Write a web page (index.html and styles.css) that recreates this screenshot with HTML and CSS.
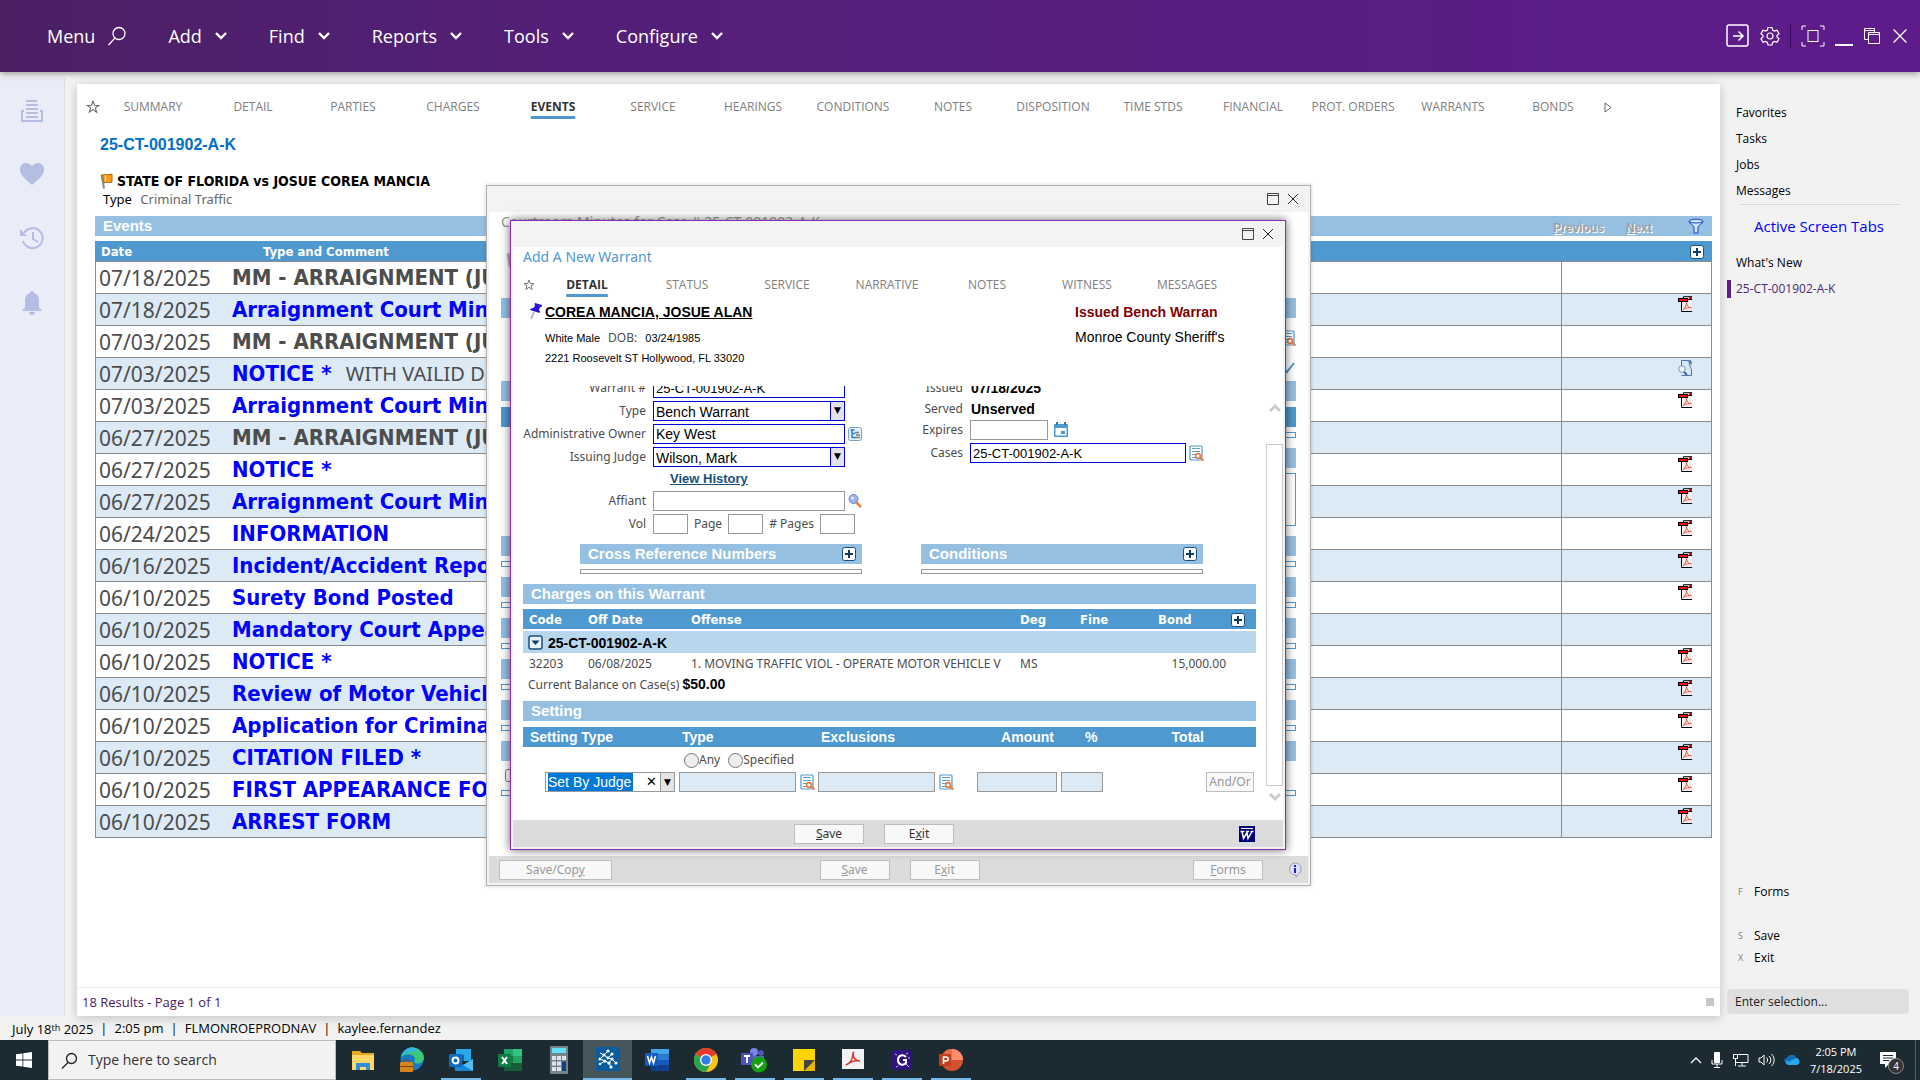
FILE: index.html
```html
<!DOCTYPE html>
<html lang="en">
<head>
    <meta charset="UTF-8">
    <meta name="viewport" content="width=device-width, initial-scale=1.0">
    <title>Add A New Warrant</title>
    <link rel="stylesheet" href="styles.css">
</head>
<body>
    <!-- Shared icons -->
    <svg class="sprite" xmlns="http://www.w3.org/2000/svg">
        <symbol id="chevron" viewBox="0 0 14 10"><path d="M2 2l5 5 5-5" fill="none" stroke="currentColor" stroke-width="2.4"/></symbol>
        <symbol id="star" viewBox="0 0 12 12"><path d="M6 1l1.3 3.5 3.6.1-2.9 2.2 1.1 3.6L6 8.3l-3.1 2.1L4 6.8 1.1 4.6l3.6-.1z" fill="none" stroke="#666" stroke-width=".9"/></symbol>
        <symbol id="close" viewBox="0 0 14 14"><path d="M2 2l10 10M12 2L2 12" fill="none" stroke="currentColor"/></symbol>
        <symbol id="maximize" viewBox="0 0 14 14"><path d="M1.5 1.5h11v11h-11zM1.5 3.5h11" fill="none" stroke="#444"/></symbol>
        <symbol id="plus" viewBox="0 0 14 14"><rect x=".5" y=".5" width="13" height="13" rx="2" fill="#fff" stroke="#164f7c"/><path d="M7 3v8M3 7h8" stroke="#0b3c66" stroke-width="2"/></symbol>
        <symbol id="pdf" viewBox="0 0 14 16"><path d="M5 .5h8.500V15.500H3.500V6" fill="#eee"/><path d="M14 .7H5.500v2M14 3.500H9M3.500 6v9.500H14" fill="none" stroke="#000"/><rect x="11" y="1" width="3" height="2" fill="#e00"/><rect x=".5" y="2.500" width="9" height="3" fill="#f00" stroke="#000"/><path d="M5 13.500c2-1 3.500-4 3.500-7 .5 3.500 2 5.500 5 5M5 13.500c3-2 6-2 8.500-2" fill="none" stroke="#e8604c"/></symbol>
        <symbol id="preview" viewBox="0 0 14 16"><path d="M3.500 6V.5h7.500c0 3 1 6 2.500 9v6H3.500" fill="#d7e6f5" stroke="#4a74a8"/><path d="M10.500.5h3v5z" fill="#3767a3"/><circle cx="4" cy="9" r="3.300" fill="#eef6ff" stroke="#7795bd"/><path d="M6 12l3 3" stroke="#3767a3" stroke-width="2"/></symbol>
        <symbol id="lookup" viewBox="0 0 15 16"><rect x="1" y="1" width="12" height="14" rx="1" fill="#fff" stroke="#4e99cf" stroke-width="1.200"/><path d="M3 3.500h8M3 6.500h8M3 9.500h4M3 12.500h3" stroke="#5e9ec8"/><circle cx="9" cy="11" r="2.400" fill="#fff" stroke="#e8793e" stroke-width="1.600"/><path d="M11 12.500l3.500 3" stroke="#e8793e" stroke-width="1.800"/></symbol>
        <symbol id="flag" viewBox="0 0 13 16"><path d="M1.500 1.500L4 15.500" stroke="#8c8c8c" stroke-width="2"/><path d="M2.500 2c3-2 5 1 9.500-1v8c-3.500 1.500-5-.5-8 1z" fill="#f59a1b" stroke="#b8690b"/><path d="M5.500 2.500v6" stroke="#ffd071" stroke-width="1.500"/></symbol>
    </svg>

    <header class="topbar">
        <nav class="menu">
            <button class="menu-item">Menu <svg width="20" height="20" viewBox="0 0 20 20"><circle cx="12" cy="7.500" r="6" fill="none" stroke="#fff" stroke-width="1.300"/><path d="M8 12l-6.500 7" stroke="#fff" stroke-width="1.300"/></svg></button>
            <button class="menu-item">Add <svg width="14" height="10"><use href="#chevron"/></svg></button>
            <button class="menu-item">Find <svg width="14" height="10"><use href="#chevron"/></svg></button>
            <button class="menu-item">Reports <svg width="14" height="10"><use href="#chevron"/></svg></button>
            <button class="menu-item">Tools <svg width="14" height="10"><use href="#chevron"/></svg></button>
            <button class="menu-item">Configure <svg width="14" height="10"><use href="#chevron"/></svg></button>
        </nav>
        <div class="window-tools">
            <button class="icon-btn" aria-label="Sign out"><svg width="24" height="24" viewBox="0 0 24 24" fill="none" stroke="#fff" stroke-width="1.500"><rect x="1" y="1" width="21" height="21" rx="2"/><path d="M7 12h10M12.500 7.500L17 12l-4.500 4.500"/></svg></button>
            <button class="icon-btn" aria-label="Settings"><svg width="20" height="20" viewBox="0 0 20 20" fill="none" stroke="#fff" stroke-width="1.200"><circle cx="10" cy="10" r="3"/><path d="M8 1.500h4l.6 2.600 1.800 1 2.600-.8 2 3.400-2 1.800v1.500l2 1.800-2 3.400-2.600-.8-1.800 1-.6 2.600H8l-.6-2.600-1.800-1-2.600.8-2-3.400 2-1.800V9.500L1 7.700l2-3.400 2.600.8 1.800-1z"/></svg></button>
            <span class="tool-divider"></span>
            <button class="icon-btn" aria-label="Full screen"><svg width="24" height="22" viewBox="0 0 24 22" fill="none" stroke="#fff"><path d="M1 5V1h4M19 1h4v4M23 17v4h-4M5 21H1v-4"/><rect x="7" y="5.500" width="10" height="11"/></svg></button>
            <button class="icon-btn" aria-label="Minimize"><svg width="18" height="22" viewBox="0 0 18 22"><path d="M0 20h18" stroke="#fff" stroke-width="2"/></svg></button>
            <button class="icon-btn" aria-label="Restore"><svg width="18" height="18" viewBox="0 0 18 18" fill="none" stroke="#fff"><path d="M5.500 12.500h-4v-11h10v4M1.500 3.500h10"/><path d="M5.500 5.500h11v11h-11zM5.500 7.500h11"/></svg></button>
            <button class="icon-btn" aria-label="Close"><svg width="18" height="18"><use href="#close"/></svg></button>
        </div>
    </header>

    <div class="workspace">
        <nav class="rail">
            <svg width="24" height="22" viewBox="0 0 24 22" fill="none" stroke="#b5bde5" stroke-width="2"><path d="M6 1h11M6 5h12M6 9h12M6 13h12M6 17h12M4 11H2v10h20V11h-2" /></svg>
            <svg width="26" height="24" viewBox="0 0 26 24"><path d="M13 23C6 17 1 13 1 7.500 1 3.500 4 1 7 1c2.500 0 4.500 1 6 3.500C14.500 2 16.500 1 19 1c3 0 6 2.500 6 6.500C25 13 20 17 13 23z" fill="#b5bde5"/></svg>
            <svg width="26" height="24" viewBox="0 0 26 24" fill="none" stroke="#b5bde5" stroke-width="2"><path d="M4 15a10 10 0 1 0 1-8"/><path d="M1 3v7h7z" fill="#b5bde5" stroke="none"/><path d="M14 6v7l5 3"/></svg>
            <svg width="22" height="26" viewBox="0 0 22 26"><path d="M11 1c1.500 0 2 1 2 2 4 1 5 5 5 8v6l3 4H1l3-4v-6c0-3 1-7 5-8 0-1 .5-2 2-2zM8 22h6c0 2-1.500 3-3 3s-3-1-3-3z" fill="#b5bde5"/></svg>
        </nav>

        <main class="page">
            <nav class="tabs">
                <svg width="16" height="14"><use href="#star"/></svg>
                <a href="#">SUMMARY</a>
                <a href="#">DETAIL</a>
                <a href="#">PARTIES</a>
                <a href="#">CHARGES</a>
                <a href="#" class="active">EVENTS</a>
                <a href="#">SERVICE</a>
                <a href="#">HEARINGS</a>
                <a href="#">CONDITIONS</a>
                <a href="#">NOTES</a>
                <a href="#">DISPOSITION</a>
                <a href="#">TIME STDS</a>
                <a href="#">FINANCIAL</a>
                <a href="#">PROT. ORDERS</a>
                <a href="#">WARRANTS</a>
                <a href="#">BONDS</a>
                <svg width="10" height="12" viewBox="0 0 10 12"><path d="M2 2v9l6-4.500z" fill="none" stroke="#666"/></svg>
            </nav>

            <section class="case">
                <h1>25-CT-001902-A-K</h1>
                <p class="case-style"><svg width="13" height="16"><use href="#flag"/></svg>STATE OF FLORIDA vs JOSUE COREA MANCIA</p>
                <p class="case-type"><span>Type</span> Criminal Traffic</p>
            </section>

            <section class="events">
                <div class="bar">
                    <h2>Events</h2>
                    <div class="pager">
                        <button disabled><u>P</u>revious</button>
                        <button disabled><u>N</u>ext</button>
                        <svg width="16" height="16" viewBox="0 0 16 16"><path d="M1 3.500c0-3 14-3 14 0 0 2-5 3.500-5 6V15H6V9.500C6 7 1 5.500 1 3.500z" fill="#cfe4ff" stroke="#1d3fd0"/><path d="M1 3.500c2 2 12 2 14 0" fill="none" stroke="#1d3fd0"/></svg>
                    </div>
                </div>
                <table class="event-table">
                    <thead>
                        <tr><th class="col-date">Date</th><th>Type and Comment</th><th class="col-doc"><svg width="14" height="14"><use href="#plus"/></svg></th></tr>
                    </thead>
                    <tbody>
                        <tr><td>07/18/2025</td><td><b>MM - ARRAIGNMENT (JUDGE WILSON)</b></td><td></td></tr>
                        <tr><td>07/18/2025</td><td><a href="#">Arraignment Court Minutes</a></td><td><svg width="14" height="16"><use href="#pdf"/></svg></td></tr>
                        <tr><td>07/03/2025</td><td><b>MM - ARRAIGNMENT (JUDGE WILSON)</b></td><td></td></tr>
                        <tr><td>07/03/2025</td><td><a href="#">NOTICE *</a> <span class="comment">WITH VAILID DL</span></td><td><svg width="14" height="16"><use href="#preview"/></svg></td></tr>
                        <tr><td>07/03/2025</td><td><a href="#">Arraignment Court Minutes</a></td><td><svg width="14" height="16"><use href="#pdf"/></svg></td></tr>
                        <tr><td>06/27/2025</td><td><b>MM - ARRAIGNMENT (JUDGE WILSON)</b></td><td></td></tr>
                        <tr><td>06/27/2025</td><td><a href="#">NOTICE *</a></td><td><svg width="14" height="16"><use href="#pdf"/></svg></td></tr>
                        <tr><td>06/27/2025</td><td><a href="#">Arraignment Court Minutes</a></td><td><svg width="14" height="16"><use href="#pdf"/></svg></td></tr>
                        <tr><td>06/24/2025</td><td><a href="#">INFORMATION</a></td><td><svg width="14" height="16"><use href="#pdf"/></svg></td></tr>
                        <tr><td>06/16/2025</td><td><a href="#">Incident/Accident Report</a></td><td><svg width="14" height="16"><use href="#pdf"/></svg></td></tr>
                        <tr><td>06/10/2025</td><td><a href="#">Surety Bond Posted</a></td><td><svg width="14" height="16"><use href="#pdf"/></svg></td></tr>
                        <tr><td>06/10/2025</td><td><a href="#">Mandatory Court Appearance</a></td><td></td></tr>
                        <tr><td>06/10/2025</td><td><a href="#">NOTICE *</a></td><td><svg width="14" height="16"><use href="#pdf"/></svg></td></tr>
                        <tr><td>06/10/2025</td><td><a href="#">Review of Motor Vehicle</a></td><td><svg width="14" height="16"><use href="#pdf"/></svg></td></tr>
                        <tr><td>06/10/2025</td><td><a href="#">Application for Criminal</a></td><td><svg width="14" height="16"><use href="#pdf"/></svg></td></tr>
                        <tr><td>06/10/2025</td><td><a href="#">CITATION FILED *</a></td><td><svg width="14" height="16"><use href="#pdf"/></svg></td></tr>
                        <tr><td>06/10/2025</td><td><a href="#">FIRST APPEARANCE FORM</a></td><td><svg width="14" height="16"><use href="#pdf"/></svg></td></tr>
                        <tr><td>06/10/2025</td><td><a href="#">ARREST FORM</a></td><td><svg width="14" height="16"><use href="#pdf"/></svg></td></tr>
                    </tbody>
                </table>
            </section>

            <footer class="results"><span>18 Results - Page 1 of 1</span><i class="grip"></i></footer>
        </main>

        <aside class="side">
            <ul class="side-links">
                <li><a href="#">Favorites</a></li>
                <li><a href="#">Tasks</a></li>
                <li><a href="#">Jobs</a></li>
                <li><a href="#">Messages</a></li>
            </ul>
            <a href="#" class="screen-tabs">Active Screen Tabs</a>
            <ul class="side-links">
                <li><a href="#">What's New</a></li>
                <li class="current"><a href="#">25-CT-001902-A-K</a></li>
            </ul>
            <ul class="shortcuts">
                <li class="spaced"><kbd>F</kbd><a href="#">Forms</a></li>
                <li><kbd>S</kbd><a href="#">Save</a></li>
                <li><kbd>X</kbd><a href="#">Exit</a></li>
            </ul>
            <input class="selection" type="text" placeholder="Enter selection..." aria-label="Enter selection">
        </aside>
    </div>

    <div class="status">
        <span>July 18<small>th</small> 2025</span><span>2:05 pm</span><span>FLMONROEPRODNAV</span><span>kaylee.fernandez</span>
    </div>

    <!-- Court minutes window, behind the warrant window -->
    <div class="window minutes" role="dialog" aria-label="Courtroom Minutes">
        <div class="titlebar">
            <button class="icon-btn" aria-label="Maximize"><svg width="14" height="14"><use href="#maximize"/></svg></button>
            <button class="icon-btn" aria-label="Close"><svg width="14" height="14"><use href="#close"/></svg></button>
        </div>
        <div class="minutes-body">
            <h2>Courtroom Minutes for Case # 25-CT-001902-A-K</h2>
            <svg class="dim-flag" width="13" height="16"><use href="#flag"/></svg>
            <div class="bar"></div>
            <div class="minutes-tools">
                <svg width="15" height="16"><use href="#lookup"/></svg>
                <svg width="16" height="12" viewBox="0 0 16 12"><path d="M2 5l5 5 7-9" fill="none" stroke="#4e99cf" stroke-width="2"/></svg>
            </div>
            <div class="bar"></div>
            <div class="bar dark"></div>
            <div class="minutes-half">
                <div class="strip"></div>
                <div class="bar"></div>
                <div class="minutes-box"></div>
            </div>
            <div class="bar"></div><div class="strip"></div>
            <div class="bar"></div><div class="strip"></div>
            <div class="bar"></div><div class="strip"></div>
            <div class="bar"></div><div class="strip"></div>
            <div class="bar"></div><div class="strip"></div>
            <div class="bar"></div>
            <input type="checkbox" aria-label="Close minutes">
            <div class="strip"></div>
        </div>
        <div class="window-footer">
            <button class="push wide" disabled>Save/Cop<u>y</u></button>
            <div class="middle">
                <button class="push" disabled><u>S</u>ave</button>
                <button class="push" disabled>E<u>x</u>it</button>
            </div>
            <button class="push" disabled><u>F</u>orms</button>
            <svg width="14" height="16" viewBox="0 0 14 16"><path d="M7 1a6 6 0 0 1 3.500 11L8 15v-2A6 6 0 1 1 7 1z" fill="#dde0f8" stroke="#9c9cc4"/><path d="M7 3v2M7 6v5" stroke="#2020c8" stroke-width="2"/></svg>
        </div>
    </div>

    <!-- Warrant window -->
    <div class="window warrant" role="dialog" aria-label="Add A New Warrant">
        <div class="titlebar">
            <button class="icon-btn" aria-label="Maximize"><svg width="14" height="14"><use href="#maximize"/></svg></button>
            <button class="icon-btn" aria-label="Close"><svg width="14" height="14"><use href="#close"/></svg></button>
        </div>
        <div class="warrant-body">
            <div class="warrant-head">
                <h2>Add A New Warrant</h2>
                <nav class="tabs">
                    <svg width="12" height="14"><use href="#star"/></svg>
                    <a href="#" class="active">DETAIL</a>
                    <a href="#">STATUS</a>
                    <a href="#">SERVICE</a>
                    <a href="#">NARRATIVE</a>
                    <a href="#">NOTES</a>
                    <a href="#">WITNESS</a>
                    <a href="#">MESSAGES</a>
                </nav>
                <div class="person">
                    <svg width="14" height="18" viewBox="0 0 14 18"><path d="M5 10L2 17" stroke="#aaa" stroke-width="1.500"/><path d="M6 1l7 2-.5 2-1.500.3L10 8l1 1.500-.5 1.500L1 8l1-1.500L4.500 6 6 3.500 5.500 2z" fill="#2b10d8"/></svg>
                    <div class="person-info">
                        <a href="#" class="person-name">COREA MANCIA, JOSUE ALAN</a>
                        <p>White Male <span>DOB:</span> 03/24/1985</p>
                        <p>2221 Roosevelt ST Hollywood, FL 33020</p>
                    </div>
                    <div class="person-status">
                        <strong>Issued Bench Warran</strong>
                        <p>Monroe County Sheriff's</p>
                    </div>
                </div>
            </div>

            <div class="scroll">
                <form class="scroll-content">
                    <div class="form-columns">
                        <div class="fields left">
                            <label for="warrant-no">Warrant #</label>
                            <input id="warrant-no" class="required" type="text" value="25-CT-001902-A-K">
                            <i></i>
                            <label for="type">Type</label>
                            <div class="drop required"><select id="type"><option>Bench Warrant</option></select><span>▼</span></div>
                            <i></i>
                            <label for="owner">Administrative Owner</label>
                            <input id="owner" class="required" type="text" value="Key West">
                            <svg width="14" height="14" viewBox="0 0 14 14"><rect x=".5" y=".5" width="13" height="13" rx="2" fill="#e9f2fb" stroke="#7f9fc4"/><path d="M2.500 3h4M4 3v7.500h3M4 6.500h3" fill="none" stroke="#1f7fd0" stroke-width="1.400"/><path d="M7 5.500h4M8 8h4M7 10.500h5" stroke="#777" stroke-width="1.400"/></svg>
                            <label for="judge">Issuing Judge</label>
                            <div class="drop required"><select id="judge"><option>Wilson, Mark</option></select><span>▼</span></div>
                            <i></i>
                            <a href="#" class="history">View History</a>
                            <label for="affiant">Affiant</label>
                            <input id="affiant" type="text">
                            <svg width="14" height="14" viewBox="0 0 14 14"><path d="M8 8l5 5" stroke="#e8883a" stroke-width="2.600"/><circle cx="5.500" cy="5" r="4.500" fill="#9fb4ee" stroke="#6f86c8"/><circle cx="4.500" cy="4" r="1.500" fill="#e4ebff"/></svg>
                            <label for="vol">Vol</label>
                            <div class="volume">
                                <input id="vol" type="text">
                                <label for="page">Page</label><input id="page" type="text">
                                <label for="pages"># Pages</label><input id="pages" type="text">
                            </div>
                        </div>
                        <div class="fields right">
                            <span class="label">Issued</span><b>07/18/2025</b>
                            <span class="label">Served</span><b>Unserved</b>
                            <label for="expires">Expires</label>
                            <div class="with-icon">
                                <input id="expires" class="short" type="text">
                                <svg width="14" height="16" viewBox="0 0 14 16"><path d="M0 2h14v13H0z" fill="#4e99cf" /><path d="M1.500 6h11v7.500h-11z" fill="#fff"/><path d="M3 0v3M11 0v3" stroke="#2d78b0" stroke-width="2"/><path d="M7 9h4v3H7z" fill="#4e99cf"/></svg>
                            </div>
                            <label for="cases">Cases</label>
                            <div class="with-icon near">
                                <input id="cases" class="required" type="text" value="25-CT-001902-A-K">
                                <svg width="15" height="16"><use href="#lookup"/></svg>
                            </div>
                        </div>
                    </div>

                    <div class="lists">
                        <div>
                            <div class="bar"><h3>Cross Reference Numbers</h3><svg width="14" height="14"><use href="#plus"/></svg></div>
                            <div class="strip"></div>
                        </div>
                        <div>
                            <div class="bar"><h3>Conditions</h3><svg width="14" height="14"><use href="#plus"/></svg></div>
                            <div class="strip"></div>
                        </div>
                    </div>

                    <div class="bar"><h3>Charges on this Warrant</h3></div>
                    <table class="charges">
                        <thead>
                            <tr><th class="c-code">Code</th><th class="c-date">Off Date</th><th class="c-offense">Offense</th><th class="c-deg">Deg</th><th>Fine</th><th class="c-bond">Bond</th><th class="c-add"><svg width="14" height="14"><use href="#plus"/></svg></th></tr>
                        </thead>
                        <tbody>
                            <tr class="group"><td colspan="7"><svg width="15" height="15" viewBox="0 0 15 15"><rect x="1" y="1" width="13" height="13" rx="2" fill="#e8f2fa" stroke="#164f7c" stroke-width="1.500"/><path d="M3.500 5.500h8l-4 4.500z" fill="#0b3c66"/></svg>25-CT-001902-A-K</td></tr>
                            <tr><td>32203</td><td>06/08/2025</td><td>1. MOVING TRAFFIC VIOL - OPERATE MOTOR VEHICLE V</td><td>MS</td><td></td><td colspan="2" class="bond">15,000.00</td></tr>
                        </tbody>
                    </table>
                    <p class="balance">Current Balance on Case(s) <b>$50.00</b></p>

                    <div class="bar"><h3>Setting</h3></div>
                    <div class="setting-grid setting-head">
                        <span>Setting Type</span><span class="type">Type</span><span class="type">Exclusions</span><span class="amount">Amount</span><span class="percent">%</span><span class="total">Total</span>
                    </div>
                    <div class="scope">
                        <label><input type="radio" name="scope">Any</label>
                        <label><input type="radio" name="scope">Specified</label>
                    </div>
                    <div class="setting-grid setting-row">
                        <div class="combo">
                            <input type="text" value="Set By Judge" aria-label="Setting type">
                            <button type="button" class="clear" aria-label="Clear">✕</button>
                            <button type="button" class="arrow" aria-label="Open list">▼</button>
                        </div>
                        <div class="with-lookup"><input type="text" disabled aria-label="Type"><svg width="15" height="16"><use href="#lookup"/></svg></div>
                        <div class="with-lookup"><input type="text" disabled aria-label="Exclusions"><svg width="15" height="16"><use href="#lookup"/></svg></div>
                        <input type="text" disabled aria-label="Amount">
                        <input type="text" disabled aria-label="Percent">
                        <button type="button" class="push and-or" disabled>And/Or</button>
                    </div>
                </form>
                <div class="scrollbar">
                    <svg width="14" height="10" viewBox="0 0 14 10"><path d="M2 8l5-5 5 5" fill="none" stroke="#ccc" stroke-width="3"/></svg>
                    <span class="thumb"></span>
                    <svg width="14" height="10" viewBox="0 0 14 10"><path d="M2 2l5 5 5-5" fill="none" stroke="#ccc" stroke-width="3"/></svg>
                </div>
            </div>
        </div>
        <div class="window-footer">
            <div class="middle">
                <button class="push"><u>S</u>ave</button>
                <button class="push">E<u>x</u>it</button>
            </div>
            <svg width="16" height="16" viewBox="0 0 16 16"><rect width="16" height="16" fill="#00007c"/><path d="M2 2.500h12" stroke="#fff" /><path d="M1.500 5.500h4M7 5.500h3M11.500 5.500h3M3 5.500l1.500 7L8 6.500l1 6 4-7" fill="none" stroke="#fff" stroke-width="1.500"/></svg>
        </div>
    </div>

    <div class="taskbar">
        <button class="start" aria-label="Start"><svg width="16" height="16" viewBox="0 0 16 16"><path d="M0 2.300l6.500-.9v6.200H0zM7.300 1.300L16 0v7.600H7.300zM0 8.400h6.500v6.200L0 13.700zM7.300 8.400H16V16l-8.700-1.300z" fill="#fff"/></svg></button>
        <label class="search">
            <svg width="17" height="17" viewBox="0 0 17 17" fill="none" stroke="#222" stroke-width="1.300"><circle cx="10.500" cy="6.500" r="5"/><path d="M7 10.500L1 16.500"/></svg>
            <input type="text" placeholder="Type here to search">
        </label>
        <div class="apps">
            <button aria-label="File Explorer"><svg width="24" height="24" viewBox="0 0 24 24"><path d="M1 3h8l2 2h12v17H1z" fill="#e9a820"/><path d="M1 7h22v15H1z" fill="#ffd868"/><path d="M5 22v-7h14v7h-4v-3H9v3z" fill="#2f8ddb"/></svg></button>
            <button aria-label="Edge"><svg width="26" height="26" viewBox="0 0 26 26"><circle cx="13" cy="12" r="11.500" fill="#1578c8"/><path d="M2 10C4 3 9 .5 13 .5c7 0 12 5 12 10 0 4-3 6-7 6-3 0-3-2-2-4 0-3-3-5-7-5-3 0-6 1-7 2.500z" fill="#3bc77c"/><path d="M2 10C4 3 9 .5 13 .5c4 0 6 2 4 4C11 4 5 6 2 10z" fill="#35b6e8"/><rect x="1" y="15" width="13" height="10" rx="1" fill="#d8841c"/><path d="M1 19.500h13M5 15v-2h5v2" fill="none" stroke="#7c4708"/></svg></button>
            <button class="open" aria-label="Outlook"><svg width="24" height="24" viewBox="0 0 24 24"><path d="M7 1h15v12H7z" fill="#28a8ea"/><path d="M7 7h8v6H7z" fill="#0f5ea8"/><path d="M5 11l9.500 6L24 11v12H6z" fill="#1784d8"/><path d="M24 11v12L14 17z" fill="#50c0f4"/><rect y="6" width="13" height="13" rx="1" fill="#0f6cbd"/><circle cx="6.500" cy="12.500" r="3" fill="none" stroke="#fff" stroke-width="1.800"/></svg></button>
            <button aria-label="Excel"><svg width="24" height="24" viewBox="0 0 24 24"><path d="M6 1h18v22H6z" fill="#21a366"/><path d="M6 8h9v7H6z" fill="#107c41"/><path d="M6 15h18v8H6z" fill="#185c37"/><path d="M15 1h9v7h-9z" fill="#33c481"/><rect y="6" width="13" height="13" rx="1" fill="#107c41"/><path d="M4 9l5 7M9 9l-5 7" stroke="#fff" stroke-width="2"/></svg></button>
            <button aria-label="Calculator"><svg width="20" height="28" viewBox="0 -2 20 28"><rect x="1" y="-2" width="18" height="28" rx="1" fill="#76828c"/><rect x="3" y="0" width="14" height="5" fill="#5fe0f5"/><path d="M3 8h4v4H3zM8 8h4v4H8zM13 8h4v4h-4zM3 13.500h4v4H3zM8 13.500h4v4H8zM3 19h4v4H3zM8 19h4v4H8z" fill="#dfe4ea"/><path d="M13 13.500h4V23h-4z" fill="#123f80"/></svg></button>
            <button class="open focused" aria-label="Court navigator"><svg width="24" height="24" viewBox="0 0 24 24"><rect width="24" height="24" fill="#0a5c9e"/><path d="M12 4L8 8l4 3 4-4M8 8l-4 4 5 2M4 17l5-3M16 12l4 4M12 11l4 1-3 4 2 4M13 16l-4-2M4 6l4 2" fill="none" stroke="#fff"/><g fill="#fff"><circle cx="12" cy="4" r="1.600"/><circle cx="8" cy="8" r="1.600"/><circle cx="12" cy="11" r="1.400"/><circle cx="16" cy="7" r="1.600"/><circle cx="4" cy="12" r="1.600"/><circle cx="9" cy="14" r="1.600"/><circle cx="4" cy="17" r="1.200"/><circle cx="16" cy="12" r="1.600"/><circle cx="20" cy="16" r="1.600"/><circle cx="13" cy="16" r="1.600"/><circle cx="15" cy="20" r="1.600"/></g></svg></button>
            <button aria-label="Word"><svg width="24" height="22" viewBox="0 0 24 22"><path d="M6 0h18v5.500H6z" fill="#41a5ee"/><path d="M6 5.500h18V11H6z" fill="#2b7cd3"/><path d="M6 11h18v5.500H6z" fill="#185abd"/><path d="M6 16.500h18V22H6z" fill="#103f91"/><rect y="4" width="13" height="13" rx="1" fill="#185abd"/><path d="M2.500 7l2 7 2-6 2 6 2-7" fill="none" stroke="#fff" stroke-width="1.500"/></svg></button>
            <button class="open" aria-label="Chrome"><svg width="24" height="24" viewBox="0 0 24 24"><circle cx="12" cy="12" r="12" fill="#fbc116"/><path d="M12 12L1.600 6A12 12 0 0 1 22.400 6z" fill="#e33b2e"/><path d="M1.600 6A12 12 0 0 0 12 24l5-9-5-3z" fill="#2da44e"/><circle cx="12" cy="12" r="6" fill="#fff"/><circle cx="12" cy="12" r="4.700" fill="#2f7de8"/></svg></button>
            <button class="open" aria-label="Teams"><svg width="27" height="26" viewBox="0 0 27 26"><circle cx="13" cy="5" r="4" fill="#7b83eb"/><circle cx="20" cy="6" r="2.800" fill="#5059c9"/><path d="M8 9h15v8c0 4-10 6-13 0z" fill="#5b62d0"/><rect x="0" y="6" width="12" height="12" rx="1" fill="#4b53bc"/><path d="M3 9h6M6 9v7" stroke="#fff" stroke-width="1.800"/><circle cx="18" cy="17.500" r="8" fill="#13a10e"/><path d="M14 17.500l3 3 5-5" fill="none" stroke="#fff" stroke-width="1.800"/></svg></button>
            <button class="open" aria-label="Sticky Notes"><svg width="22" height="22" viewBox="0 0 22 22"><path d="M0 0h22v11L11 22H0z" fill="#ffd500"/><path d="M22 11L11 22V11z" fill="#444"/><path d="M22 11v11H11z" fill="#e8b400"/></svg></button>
            <button class="open" aria-label="Acrobat"><svg width="22" height="22" viewBox="0 0 22 22"><rect width="22" height="20" fill="#f2f2f2"/><path d="M4 16c4-1 7-6 7-12 1-1 1-1 0 0 0 5 3 8 7 8-4-1-10 1-14 4z" fill="none" stroke="#e03030" stroke-width="1.500"/></svg></button>
            <button class="open" aria-label="Clip tool"><svg width="20" height="20" viewBox="0 0 20 20"><rect width="20" height="20" rx="3" fill="#32127c"/><path d="M14 7c-3-3-8-2-8 3s5 6 8 3v-3h-3" fill="none" stroke="#fff" stroke-width="2"/><path d="M3 4l2 1M16 3l-2 1M4 17l2-1M14 14l3 3M17 7v2" stroke="#cbb8f0"/></svg></button>
            <button class="open" aria-label="PowerPoint"><svg width="24" height="22" viewBox="0 0 24 22"><circle cx="13" cy="11" r="11" fill="#d35230"/><path d="M13 0v11H2A11 11 0 0 1 13 0z" fill="#ed6c47"/><path d="M13 0a11 11 0 0 1 11 11H13z" fill="#ff8f6b"/><rect y="5" width="12" height="12" rx="1" fill="#c43e1c"/><path d="M4.500 15V8H7c3 0 3 4 0 4H4.500" fill="none" stroke="#fff" stroke-width="1.600"/></svg></button>
        </div>
        <div class="tray">
            <svg width="12" height="8" viewBox="0 0 12 8"><path d="M1 7l5-5 5 5" fill="none" stroke="#fff" stroke-width="1.300"/></svg>
            <svg width="12" height="16" viewBox="0 0 12 16"><rect x="3" y="0" width="6" height="11" rx="1" fill="#fff"/><path d="M1 8v4h10V8M6 12v3M3 15.500h6" fill="none" stroke="#fff"/></svg>
            <svg width="17" height="14" viewBox="0 0 17 14" fill="none" stroke="#fff"><path d="M5 1.500h11v8H4M10 9.500v3M6 13h8M1.500 1.500h4v4h-4zM3.500 6v7"/></svg>
            <svg width="17" height="14" viewBox="0 0 17 14" fill="none" stroke="#fff"><path d="M1 5h2l3-3v10L3 9H1zM8.500 4.500c1.500 1.500 1.500 3.500 0 5M11 3c2.500 2.500 2.500 5.500 0 8M13.500 1c3.500 3.500 3.500 8.500 0 12"/></svg>
            <svg width="16" height="12" viewBox="0 0 16 12"><path d="M4 11a4 4 0 0 1-1-7c2-4 8-4 9 0 4 0 5 6 1 7z" fill="#28a8ea"/><path d="M3 4c2-4 8-4 9 0l-8 4c-1-2-3-1-4 0 0-2 1-4 3-4z" fill="#0f6cbd"/></svg>
            <div class="clock"><span>2:05 PM</span><span>7/18/2025</span></div>
            <div class="notify">
                <svg width="17" height="16" viewBox="0 0 17 16"><path d="M0 0h16v12H9l-4 4v-4H0z" fill="#fff"/><path d="M3 3.500h10M3 6h10M3 8.500h6" stroke="#1b2b31"/></svg>
                <span>4</span>
            </div>
        </div>
    </div>
</body>
</html>
```
FILE: styles.css
```css
* {
    box-sizing: border-box;
}

body {
    margin: 0;
    height: 100vh;
    display: flex;
    flex-direction: column;
    overflow: hidden;
    background: #f2f2f2;
    color: #000;
    font-family: "Open Sans", "Noto Sans", sans-serif;
    font-size: 12px;
    line-height: 16px;
}

h1, h2, h3, p, ul {
    margin: 0;
    padding: 0;
    list-style: none;
}

a {
    text-decoration: none;
    color: inherit;
}

svg {
    display: block;
    flex: none;
}

button, input, select {
    font: inherit;
    color: inherit;
}

.sprite {
    display: none;
}

.icon-btn {
    padding: 0;
    border: 0;
    background: none;
    display: flex;
}

/* Top bar */
.topbar {
    height: 72px;
    display: flex;
    align-items: center;
    justify-content: space-between;
    padding: 0 11px 0 47px;
    background: linear-gradient(90deg, #4b2063, #521f76 25%, #5e1c8b);
    color: #fff;
    box-shadow: 0 2px 6px rgba(0, 0, 0, 0.35);
    position: relative;
}

.menu {
    display: flex;
    gap: 41px;
}

.menu-item {
    display: flex;
    align-items: center;
    gap: 12px;
    padding: 0;
    border: 0;
    background: none;
    font-size: 18px;
    line-height: 24px;
}

.window-tools {
    display: flex;
    align-items: center;
    gap: 10px;
}

.tool-divider {
    width: 1px;
    height: 24px;
    background: #35105a;
}

/* Workspace */
.workspace {
    flex: 1;
    min-height: 0;
    display: flex;
}

.rail {
    width: 65px;
    margin-top: 6px;
    padding-top: 22px;
    display: flex;
    flex-direction: column;
    align-items: center;
    gap: 40px;
    background: #eaedf7;
    border-right: 1px solid #dadde3;
}

.page {
    flex: 1;
    min-width: 0;
    margin: 12px 0 0 12px;
    display: flex;
    flex-direction: column;
    background: #fff;
    box-shadow: 0 2px 10px rgba(0, 0, 0, 0.2);
}

.tabs {
    display: flex;
    align-items: center;
    padding-left: 8px;
    font-size: 12px;
    color: #808080;
}

.tabs > svg:first-child {
    margin-right: 2px;
}

.tabs a {
    width: 100px;
    text-align: center;
    font-size: 12px;
}

.tabs .active {
    font-weight: bold;
    color: #333;
    text-decoration: underline 3px #4e99cf;
    text-underline-offset: 5px;
}

.page .tabs {
    height: 46px;
}

.case {
    padding: 5px 23px 9px;
    font-family: "Liberation Sans", Arial, sans-serif;
}

.case h1 {
    font-size: 16px;
    line-height: 20px;
    color: #0070c8;
}

.case-style {
    display: flex;
    align-items: center;
    gap: 4px;
    margin-top: 16px;
    font: bold 14px/20px "DejaVu Sans Condensed", "DejaVu Sans", sans-serif;
}

.case-type {
    padding-left: 3px;
    font: 13px/16px "Noto Sans", sans-serif;
    color: #666;
}

.case-type span {
    margin-right: 5px;
    color: #000;
}

.events {
    flex: 1;
    padding: 0 8px 0 18px;
}

.bar {
    height: 20px;
    display: flex;
    align-items: center;
    justify-content: space-between;
    padding: 0 8px;
    background: #95c0e2;
    color: #fff;
    font-family: "Liberation Sans", Arial, sans-serif;
}

.bar h2,
.bar h3 {
    font-size: 15px;
    line-height: 20px;
}

.bar.dark {
    background: #4e99cf;
}

.pager {
    display: flex;
    align-items: center;
}

.pager button {
    margin-right: 22px;
    padding: 4px 0 0;
    border: 0;
    background: none;
    font-size: 12px;
    font-weight: bold;
    color: #a0a0a0;
    text-shadow: 1px 1px #fff;
}

.pager button + button {
    margin-right: 36px;
}

table {
    width: 100%;
    table-layout: fixed;
    border-collapse: separate;
    border-spacing: 0;
}

th, td {
    padding: 0;
    text-align: left;
    white-space: nowrap;
    overflow: hidden;
}

.event-table {
    margin-top: 5px;
}

.event-table th {
    height: 20px;
    padding-top: 2px;
    background: #4e99cf;
    color: #fff;
    font: bold 13px/18px "DejaVu Sans Condensed", "DejaVu Sans", sans-serif;
}

.event-table .col-date {
    width: 137px;
    padding-left: 6px;
}

.event-table th:nth-child(2) {
    padding-left: 31px;
}

.event-table .col-doc {
    width: 151px;
}

.event-table .col-doc svg {
    margin-left: auto;
    margin-right: 8px;
}

.event-table td {
    height: 32px;
    border-top: 1px solid #8c8c8c;
    color: #4d4d4d;
    font: 21px/24px "Noto Sans", sans-serif;
}

.event-table td:first-child {
    padding-left: 3px;
    border-left: 1px solid #8c8c8c;
}

.event-table td:nth-child(2) {
    font-family: "DejaVu Sans Condensed", "DejaVu Sans", sans-serif;
    font-size: 22px;
}

.event-table td:last-child {
    border-left: 1px solid #8c8c8c;
    border-right: 1px solid #8c8c8c;
    vertical-align: top;
}

.event-table td svg {
    margin: 2px 19px 0 auto;
}

.event-table tr:last-child td {
    border-bottom: 1px solid #8c8c8c;
}

.event-table tbody tr:last-child td {
    height: 33px;
}

.event-table thead th {
    border: 0;
}

.event-table tbody tr:nth-child(even) td {
    background: #dceaf5;
}

.event-table td a {
    color: #00f;
    font-weight: bold;
}

.event-table .comment {
    padding-left: 8px;
    font: 20px/24px "Noto Sans", sans-serif;
}

.results {
    height: 29px;
    display: flex;
    align-items: center;
    justify-content: space-between;
    padding: 0 6px 0 5px;
    border-top: 1px solid #eee;
    font-size: 13px;
    color: #4b2063;
}

.grip {
    width: 8px;
    height: 8px;
    background: #c8c8c8;
}

/* Right pane */
.side {
    width: 200px;
    display: flex;
    flex-direction: column;
    padding: 28px 11px 2px 7px;
}

.side-links li {
    height: 26px;
    padding: 5px 9px;
    line-height: 16px;
}

.side-links .current {
    color: #4b2a75;
    padding: 4px 0 0 0;
}

.side-links .current a {
    display: block;
    border-left: 4px solid #5e1c8b;
    padding-left: 5px;
    line-height: 18px;
}

.screen-tabs {
    margin: 0 9px 4px 13px;
    padding: 9px 0 8px 14px;
    border-top: 1px solid #d8d8d8;
    font-size: 15px;
    line-height: 24px;
    color: #00f;
}

.shortcuts {
    margin-top: auto;
    margin-bottom: 20px;
}

.shortcuts li {
    display: flex;
    align-items: center;
    height: 22px;
    padding-left: 11px;
}

.shortcuts .spaced {
    margin-bottom: 22px;
}

.shortcuts kbd {
    width: 16px;
    font: 9px/16px "Open Sans", sans-serif;
    color: #808080;
}

.selection {
    width: 100%;
    height: 25px;
    padding: 0 8px;
    border: 0;
    border-radius: 4px;
    background: #dfdfdf;
    font-size: 12px;
}

.selection::placeholder {
    color: #222;
}

.status {
    height: 24px;
    display: flex;
    align-items: center;
    padding-left: 12px;
    font-size: 13px;
}

.status span + span::before {
    content: "|";
    margin: 0 7px;
}

.status small {
    font-size: 9px;
    vertical-align: 3px;
}

/* Floating windows */
.window {
    position: absolute;
    display: flex;
    flex-direction: column;
    padding: 0 2px 2px;
    background: #f3f3f3;
    border: 1px solid #b0b0b0;
    font-family: "Noto Sans", sans-serif;
}

.titlebar {
    height: 26px;
    display: flex;
    align-items: center;
    justify-content: flex-end;
    gap: 6px;
    padding-right: 8px;
    color: #222;
}

.window-footer {
    height: 27px;
    display: flex;
    align-items: center;
    background: #dcdcdc;
}

.push {
    width: 70px;
    height: 20px;
    padding: 0;
    border: 1px solid #bdbdbd;
    background: #f8f8f8;
    font-size: 12px;
    line-height: 16px;
    color: #333;
}

.push:disabled {
    color: #999;
}

.push.wide {
    width: 113px;
}

.middle {
    display: flex;
    gap: 20px;
}

.strip {
    height: 5px;
    border: 1px solid #999;
    background: #fff;
}

.minutes {
    left: 486px;
    top: 185px;
    width: 825px;
    box-shadow: 0 0 4px rgba(0, 0, 0, 0.2);
}

.minutes-body {
    padding: 0 12px 50px;
    display: flex;
    flex-direction: column;
    background: #fff;
}

.minutes-body h2 {
    font-size: 14px;
    font-weight: normal;
    line-height: 20px;
    color: #999;
}

.dim-flag {
    margin: 20px 0 30px 5px;
    filter: grayscale(1);
    opacity: 0.6;
}

.minutes-tools {
    height: 63px;
    padding-top: 12px;
    display: flex;
    flex-direction: column;
    align-items: flex-end;
    gap: 16px;
}

.minutes-body .bar.dark {
    margin-top: 6px;
}

.minutes-body .strip {
    height: 6px;
    margin: 5px 0 10px;
    border-color: #4e99cf;
}

.minutes-half {
    margin-left: 50%;
    margin-bottom: 10px;
}

.minutes-box {
    height: 53px;
    margin-top: 5px;
    border: 1px solid #4e99cf;
}

.minutes-body input {
    width: 13px;
    height: 13px;
    margin: 8px 0 3px 4px;
}

.minutes .window-footer {
    padding: 0 6px 0 10px;
}

.minutes .middle {
    margin: 0 auto;
    padding-right: 6px;
}

.minutes .window-footer > svg {
    margin-left: 25px;
}

.warrant {
    left: 510px;
    top: 220px;
    width: 776px;
    border-color: #8a2bb5;
    box-shadow: 0 0 9px rgba(0, 0, 0, 0.6);
}

.warrant-body {
    background: #fff;
}

.warrant-head {
    padding: 0 10px;
    height: 139px;
}

.warrant-head h2 {
    font-size: 14px;
    font-weight: normal;
    line-height: 20px;
    color: #4e99cf;
}

.warrant-head .tabs {
    height: 35px;
    padding-left: 0;
    font-family: "Open Sans", sans-serif;
}

.person {
    display: flex;
    padding-left: 6px;
    gap: 2px;
    font: 11px/20px "Liberation Sans", Arial, sans-serif;
}

.person-name {
    font-size: 14px;
    font-weight: bold;
    line-height: 20px;
    text-decoration: underline;
}

.person-info p {
    margin-top: 5px;
    line-height: 20px;
}

.person-info p + p {
    margin-top: 0;
}

.person-info span {
    margin: 0 5px;
    font-family: "Noto Sans", sans-serif;
    font-size: 12px;
    color: #4d4d4d;
}

.person-status {
    width: 148px;
    margin-left: auto;
    margin-right: 50px;
    white-space: nowrap;
    font-size: 14px;
}

.person-status strong {
    line-height: 20px;
    color: #800000;
}

.person-status p {
    margin-top: 5px;
}

/* The form is scrolled down a little */
.scroll {
    display: flex;
    height: 434px;
    overflow: hidden;
}

.scroll-content {
    flex: 1;
    min-width: 0;
    margin-top: -8px;
    padding: 0 10px;
}

.scrollbar {
    width: 17px;
    display: flex;
    flex-direction: column;
    align-items: center;
    padding: 17px 0 18px;
}

.scrollbar .thumb {
    flex: 1;
    width: 17px;
    margin: 31px 0 6px;
    border: 1px solid #ccc;
}

.form-columns {
    display: flex;
}

.fields {
    display: grid;
    grid-template-columns: 123px 192px 17px;
    column-gap: 7px;
    row-gap: 3px;
    align-items: center;
}

.fields.left {
    grid-template-rows: 20px 20px 20px 20px 18px 20px 20px;
}

.fields.left > svg {
    margin-left: -4px;
}

.fields.right {
    grid-template-columns: 94px 240px;
    grid-template-rows: 20px 16px 20px 20px;
    align-self: start;
}

.fields label,
.fields .label {
    text-align: right;
    color: #4d4d4d;
    white-space: nowrap;
}

.fields input,
.setting-row input {
    width: 100%;
    height: 20px;
    padding: 0 2px;
    border: 1px solid #999;
    background: #fff;
    font: 14px/18px "Liberation Sans", Arial, sans-serif;
}

.fields .required {
    border-color: #00d;
}

.fields b {
    padding-left: 1px;
    font: bold 14px/16px "Liberation Sans", Arial, sans-serif;
}

#cases, #warrant-no {
    font-size: 13px;
}

.drop {
    display: flex;
    height: 20px;
    border: 1px solid #00d;
}

.drop select {
    flex: 1;
    appearance: none;
    padding: 1px 2px 0;
    border: 0;
    background: #fff;
    font: 14px/18px "Liberation Sans", Arial, sans-serif;
}

.drop span {
    width: 14px;
    border-left: 1px solid #00d;
    background: #e2e2ea;
    color: #000;
    font: 9px/16px "DejaVu Sans", sans-serif;
    text-align: center;
}

.history {
    grid-column: 2 / 4;
    padding-left: 17px;
    font: bold 13px/18px "Liberation Sans", Arial, sans-serif;
    text-decoration: underline;
    color: #17507c;
}

.volume {
    grid-column: 2 / 4;
    display: flex;
    align-items: center;
    gap: 6px;
}

.volume input {
    width: 35px;
}

.with-icon {
    display: flex;
    align-items: center;
    gap: 6px;
}

.with-icon.near {
    gap: 3px;
}

.with-icon .short {
    width: 78px;
}

.with-icon.near input {
    width: 216px;
}

.lists {
    display: flex;
    gap: 59px;
    padding: 10px 53px 10px 57px;
}

.lists > div {
    flex: 1;
}

.lists .bar {
    padding-right: 6px;
}

.lists .strip {
    margin-top: 5px;
}

.charges {
    margin-top: 5px;
    font-size: 12px;
    color: #4d4d4d;
}

.charges th {
    height: 20px;
    padding-top: 2px;
    background: #4e99cf;
    color: #fff;
    font: bold 13px/18px "DejaVu Sans Condensed", "DejaVu Sans", sans-serif;
}

.c-code { width: 65px; }
.c-date { width: 103px; }
.c-offense { width: 329px; }
.c-deg { width: 60px; }
.c-bond { width: 73px; }
.c-add { width: 25px; }

.charges th:first-child,
.charges td:first-child {
    padding-left: 6px;
}

.charges td {
    height: 22px;
}

.charges .group td {
    height: 24px;
    border-top: 2px solid #fff;
    background: #b8d6ec;
    color: #000;
    font: bold 14px/20px "Liberation Sans", Arial, sans-serif;
    padding: 2px 0 0 5px;
}

.group svg {
    display: inline-block;
    vertical-align: -2px;
    margin-right: 5px;
}

.charges .bond {
    text-align: right;
    padding-right: 30px;
}

.balance {
    padding: 0 5px 7px;
    line-height: 19px;
    color: #4d4d4d;
}

.balance b {
    font: bold 14px/16px "Liberation Sans", Arial, sans-serif;
    color: #000;
}

.setting-grid {
    display: grid;
    grid-template-columns: 130px 135px 155px 80px 42px 1fr;
    column-gap: 4px;
    align-items: center;
}

.setting-head {
    height: 20px;
    margin-top: 6px;
    padding-left: 7px;
    grid-template-columns: 145px 135px 155px 80px 42px 1fr;
    background: #4e99cf;
    color: #fff;
    font: bold 14px/20px "Liberation Sans", Arial, sans-serif;
}

.setting-head .type {
    padding-left: 3px;
}

.setting-head .amount {
    text-align: right;
    padding-right: 3px;
}

.setting-head .percent {
    padding-left: 24px;
}

.setting-head .total {
    text-align: right;
    padding-right: 52px;
}

.scope {
    display: flex;
    gap: 8px;
    padding: 4px 0 3px 161px;
    color: #4d4d4d;
}

.scope label {
    display: flex;
    align-items: center;
    height: 18px;
}

.scope input {
    appearance: none;
    width: 15px;
    height: 15px;
    margin: 0;
    border: 1px solid #777;
    border-radius: 50%;
    background: #eee;
}

.setting-row {
    padding-left: 22px;
}

.setting-row input:disabled {
    background: #dceaf5;
}

.combo {
    display: flex;
    align-items: center;
    height: 20px;
    border: 1px solid #999;
    padding-left: 2px;
}

.combo input {
    width: 85px;
    height: 18px;
    padding: 0;
    border: 0;
    background: #0078d7;
    color: #fff;
}

.combo button {
    height: 18px;
    padding: 0;
    border: 0;
    background: none;
    font: 13px/18px "DejaVu Sans", sans-serif;
    color: #000;
}

.combo .clear {
    flex: 1;
    padding-left: 10px;
}

.combo .arrow {
    width: 14px;
    border-left: 1px solid #999;
    background: #e4e4e4;
    font-size: 9px;
}

.with-lookup {
    display: flex;
    align-items: center;
    gap: 4px;
}

.with-lookup input {
    width: 117px;
}

.setting-row .and-or {
    width: 48px;
    margin-left: auto;
    margin-right: 2px;
}

.warrant .window-footer {
    padding: 0 28px 0 281px;
    justify-content: space-between;
}

/* Taskbar */
.taskbar {
    height: 40px;
    display: flex;
    background: #1b2b31;
    color: #fff;
}

.start {
    width: 48px;
    padding: 0;
    border: 0;
    background: none;
    display: flex;
    align-items: center;
    justify-content: center;
}

.search {
    width: 288px;
    display: flex;
    align-items: center;
    gap: 8px;
    padding-left: 12px;
    border: 1px solid #bbb;
    background: #f2f2f2;
}

.search input {
    flex: 1;
    border: 0;
    background: none;
    font-size: 14px;
}

.search input::placeholder {
    color: #333;
}

.apps {
    display: flex;
    padding-left: 2px;
}

.apps button {
    width: 49px;
    padding: 0;
    border: 0;
    background: none;
    display: flex;
    align-items: center;
    justify-content: center;
}

.apps .open {
    background: linear-gradient(#76b9ed, #76b9ed) bottom / 40px 2px no-repeat;
}

.apps .focused {
    background: #47565a;
    border-bottom: 2px solid #76b9ed;
}

.tray {
    margin-left: auto;
    display: flex;
    align-items: center;
    gap: 9px;
    margin-right: 4px;
    padding-right: 10px;
    border-right: 1px solid #56646a;
}

.clock {
    display: flex;
    flex-direction: column;
    align-items: center;
    margin: 0 9px 0 1px;
    font-size: 11px;
    line-height: 17px;
}

.notify {
    position: relative;
    padding-right: 8px;
}

.notify span {
    position: absolute;
    left: 8px;
    top: 6px;
    width: 16px;
    height: 16px;
    border: 1px solid #888;
    border-radius: 50%;
    background: #333;
    font-size: 10px;
    line-height: 14px;
    text-align: center;
}
```
